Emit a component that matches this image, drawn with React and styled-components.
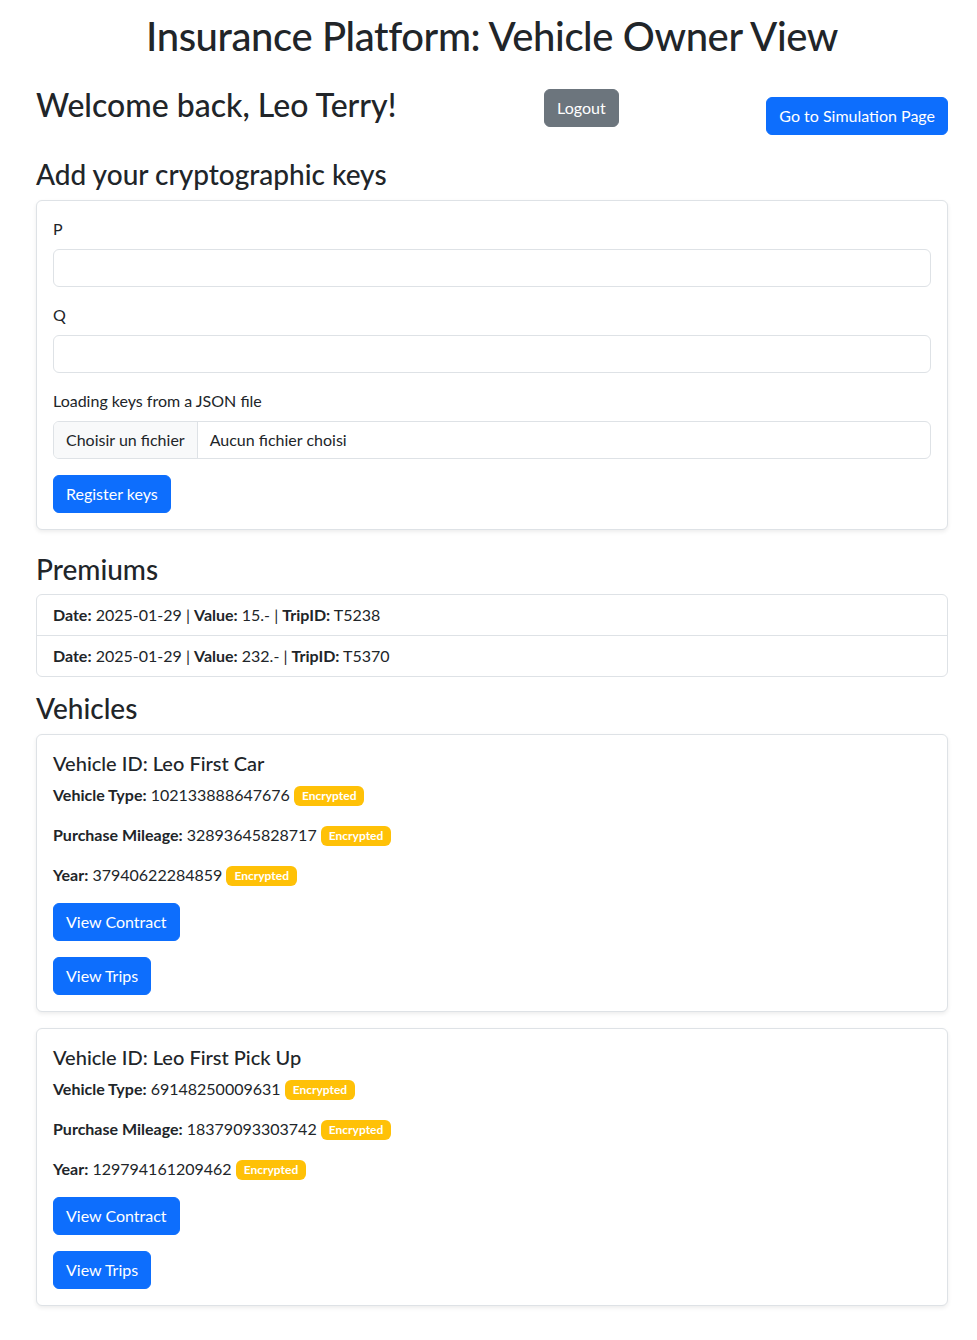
import React from 'react';
import styled, { createGlobalStyle } from 'styled-components';

const GlobalStyle = createGlobalStyle`
  * { box-sizing: border-box; }
  body {
    margin: 0;
    background: #fff;
    color: #212529;
    font-family: Lato, 'Noto Sans', sans-serif;
    font-size: 16px;
    line-height: 1.5;
  }
`;

const Page = styled.div`
  padding: 12px 29px 32px 36px;
`;

const Title = styled.h1`
  margin: 0 0 8px;
  font-size: 40px;
  font-weight: 500;
  line-height: 1.2;
  text-align: center;
  letter-spacing: -0.01em;
`;

const TopBar = styled.div`
  display: flex;
  justify-content: space-between;
  align-items: flex-start;
  margin-top: 26px;
`;

const Welcome = styled.h2`
  margin: 0 0 8px;
  font-size: 32px;
  font-weight: 500;
  line-height: 1.2;
`;

const Button = styled.button`
  display: inline-block;
  height: 38px;
  padding: 6px 12px;
  border: 1px solid ${(p) => (p.$variant === 'secondary' ? '#6c757d' : '#0d6efd')};
  border-radius: 6px;
  background: ${(p) => (p.$variant === 'secondary' ? '#6c757d' : '#0d6efd')};
  color: #fff;
  font-family: inherit;
  font-size: 16px;
  line-height: 1.5;
  cursor: pointer;
  margin-top: ${(p) => p.$offset || 0}px;
  white-space: nowrap;
`;

const SectionTitle = styled.h3`
  margin: ${(p) => p.$top || 24}px 0 8px;
  font-size: 28px;
  font-weight: 500;
  line-height: 1.2;
`;

const Card = styled.div`
  border: 1px solid #dee2e6;
  border-radius: 6px;
  padding: 16px;
  background: #fff;
  box-shadow: 0 2px 4px rgba(0, 0, 0, 0.075);
  & + & {
    margin-top: 16px;
  }
`;

const Field = styled.div`
  margin-bottom: 16px;
`;

const Label = styled.label`
  display: block;
  margin-bottom: 8px;
  font-size: 16px;
`;

const Input = styled.input`
  display: block;
  width: 100%;
  height: 38px;
  padding: 6px 12px;
  border: 1px solid #dee2e6;
  border-radius: 6px;
  font-family: inherit;
  font-size: 16px;
`;

const FileBox = styled.label`
  display: flex;
  height: 38px;
  border: 1px solid #dee2e6;
  border-radius: 6px;
  overflow: hidden;
  cursor: pointer;

  input {
    display: none;
  }
`;

const FileButton = styled.span`
  display: flex;
  align-items: center;
  padding: 0 12px;
  background: #f8f9fa;
  border-right: 1px solid #dee2e6;
`;

const FileName = styled.span`
  display: flex;
  align-items: center;
  padding: 0 12px;
`;

const ListGroup = styled.ul`
  list-style: none;
  margin: 0;
  padding: 0;
  border: 1px solid #dee2e6;
  border-radius: 6px;
`;

const ListItem = styled.li`
  padding: 8px 16px;
  & + & {
    border-top: 1px solid #dee2e6;
  }
`;

const VehicleTitle = styled.h5`
  margin: 0 0 8px;
  font-size: 20px;
  font-weight: 500;
  line-height: 1.2;
`;

const Info = styled.p`
  margin: 0 0 16px;
`;

const Badge = styled.span`
  display: inline-block;
  padding: 4px 8px;
  border-radius: 6px;
  background: #ffc107;
  color: #fff;
  font-size: 12px;
  font-weight: 700;
  line-height: 1;
  vertical-align: 1px;
`;

const Actions = styled.div`
  display: flex;
  flex-direction: column;
  align-items: flex-start;
  gap: 16px;
`;

const premiums = [
  { date: '2025-01-29', value: '15.-', trip: 'T5238' },
  { date: '2025-01-29', value: '232.-', trip: 'T5370' },
];

const vehicles = [
  { id: 'Leo First Car', type: '102133888647676', mileage: '32893645828717', year: '37940622284859' },
  { id: 'Leo First Pick Up', type: '69148250009631', mileage: '18379093303742', year: '129794161209462' },
];

const App = () => (
  <Page>
    <GlobalStyle />
    <Title>Insurance Platform: Vehicle Owner View</Title>
    <TopBar>
      <Welcome>Welcome back, Leo Terry!</Welcome>
      <Button $variant='secondary' $offset={3}>Logout</Button>
      <Button $offset={11}>Go to Simulation Page</Button>
    </TopBar>

    <SectionTitle $top={23}>Add your cryptographic keys</SectionTitle>
    <Card>
      <Field>
        <Label>P</Label>
        <Input type='text' />
      </Field>
      <Field>
        <Label>Q</Label>
        <Input type='text' />
      </Field>
      <Field>
        <Label>Loading keys from a JSON file</Label>
        <FileBox>
          <input type='file' accept='.json' />
          <FileButton>Choisir un fichier</FileButton>
          <FileName>Aucun fichier choisi</FileName>
        </FileBox>
      </Field>
      <Button>Register keys</Button>
    </Card>

    <SectionTitle $top={23}>Premiums</SectionTitle>
    <ListGroup>
      {premiums.map((p) => (
        <ListItem key={p.trip}>
          <strong>Date:</strong> {p.date} | <strong>Value:</strong> {p.value} | <strong>TripID:</strong> {p.trip}
        </ListItem>
      ))}
    </ListGroup>

    <SectionTitle $top={15}>Vehicles</SectionTitle>
    {vehicles.map((v) => (
      <Card key={v.id}>
        <VehicleTitle>Vehicle ID: {v.id}</VehicleTitle>
        <Info>
          <strong>Vehicle Type:</strong> {v.type} <Badge>Encrypted</Badge>
        </Info>
        <Info>
          <strong>Purchase Mileage:</strong> {v.mileage} <Badge>Encrypted</Badge>
        </Info>
        <Info>
          <strong>Year:</strong> {v.year} <Badge>Encrypted</Badge>
        </Info>
        <Actions>
          <Button>View Contract</Button>
          <Button>View Trips</Button>
        </Actions>
      </Card>
    ))}
  </Page>
);

export default App;
